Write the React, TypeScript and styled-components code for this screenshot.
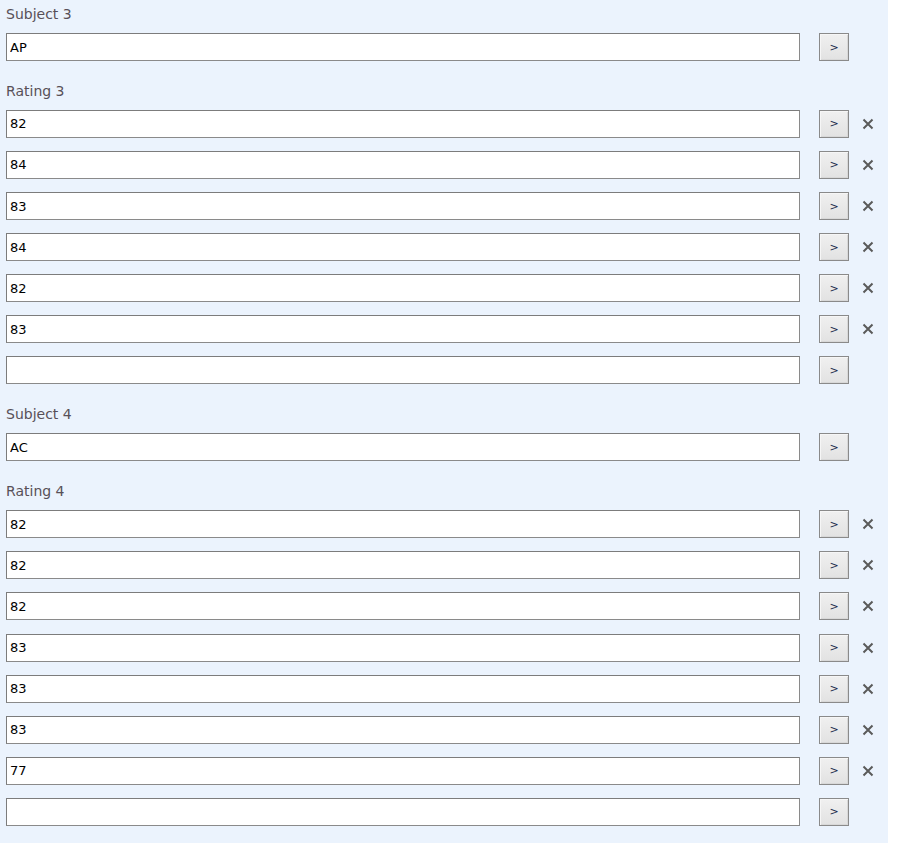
import React from 'react'
import styled, { createGlobalStyle } from 'styled-components'

const GlobalStyle = createGlobalStyle`
  html, body {
    margin: 0;
    padding: 0;
    background: #ffffff;
  }
`

interface Igroup {
  label: string;
  values: string[];
  removable: boolean;
}

const groups: Igroup[] = [
  { label: 'Subject 3', values: ['AP'], removable: false },
  { label: 'Rating 3', values: ['82', '84', '83', '84', '82', '83', ''], removable: true },
  { label: 'Subject 4', values: ['AC'], removable: false },
  { label: 'Rating 4', values: ['82', '82', '82', '83', '83', '83', '77', ''], removable: true },
]

function RemoveIcon() {
  return (
    <svg width="12" height="12" viewBox="0 0 12 12">
      <path d="M1.5 1.5 L10.5 10.5 M10.5 1.5 L1.5 10.5" stroke="#5a5a5a" strokeWidth="2" fill="none" />
    </svg>
  )
}

function FieldGroup(props: Igroup) {
  return (
    <Group>
      <Label>{props.label}</Label>
      {props.values.map((v, i) => (
        <Row key={i}>
          <TextBox defaultValue={v} />
          <GoButton type="button">&gt;</GoButton>
          {props.removable && v !== '' && (
            <Remove><RemoveIcon /></Remove>
          )}
        </Row>
      ))}
    </Group>
  )
}

export default function App() {
  return (
    <>
      <GlobalStyle />
      <Panel>
        {groups.map((g) => (
          <FieldGroup key={g.label} {...g} />
        ))}
      </Panel>
    </>
  )
}

const Panel = styled.div`
  width: 876px;
  min-height: 843px;
  padding: 0 6px;
  background: #ebf3fd;
  font-family: "DejaVu Sans", Verdana, sans-serif;
`

/* padding, not margin, so it doesn't collapse into the last row's margin */
const Group = styled.div`
  padding-bottom: 2.8px;
`

const Label = styled.div`
  padding-top: 6px;
  margin-bottom: 11px;
  height: 16px;
  line-height: 16px;
  font-size: 14px;
  color: #585058;
`

const Row = styled.div`
  display: flex;
  align-items: center;
  height: 28px;
  margin-bottom: 13.1px;
`

const TextBox = styled.input`
  box-sizing: border-box;
  width: 794px;
  height: 28px;
  margin: 0;
  padding: 0 3px;
  border: 1px solid #8a8a8a;
  border-top-color: #7c7c7c;
  border-left-color: #7c7c7c;
  background: #ffffff;
  font-family: "DejaVu Sans", Verdana, sans-serif;
  font-size: 13px;
  color: #000000;
  outline: none;
`

const GoButton = styled.button`
  box-sizing: border-box;
  width: 30px;
  height: 28px;
  margin: 0 0 0 19px;
  padding: 0;
  border: 1px solid #8a8a8a;
  box-shadow: inset 1px 1px 0 #f6f6f6, inset -1px -1px 0 #d8d8d8;
  background: linear-gradient(#f0f0f0, #e2e2e2);
  font-family: "DejaVu Sans", Verdana, sans-serif;
  font-size: 11px;
  color: #1c2c4c;
  cursor: pointer;
`

const Remove = styled.span`
  display: flex;
  align-items: center;
  margin-left: 13px;
  cursor: pointer;
`
